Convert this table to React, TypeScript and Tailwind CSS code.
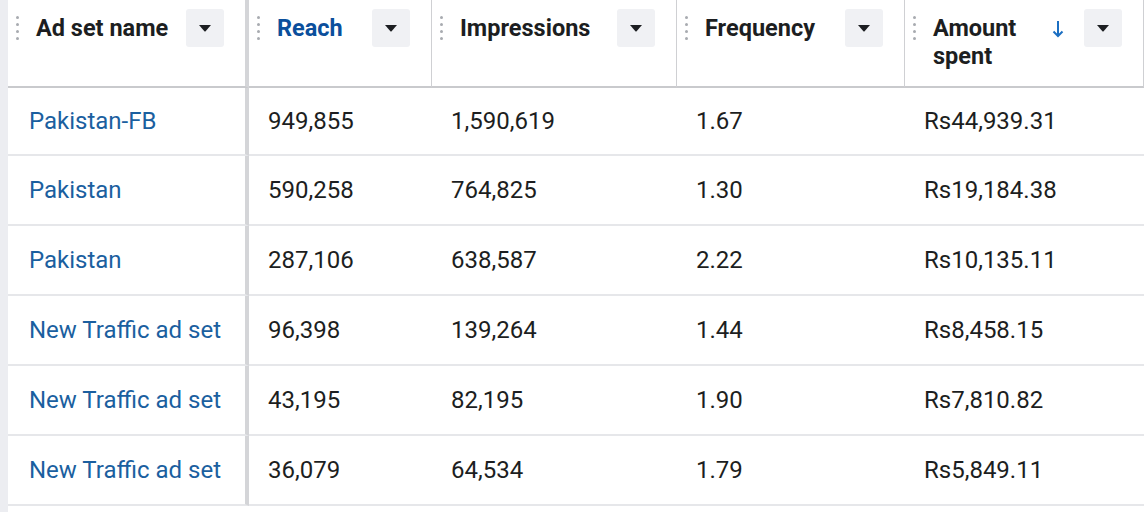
import React from "react";

const rows = [
  { name: "Pakistan-FB", reach: "949,855", impressions: "1,590,619", frequency: "1.67", spent: "Rs44,939.31" },
  { name: "Pakistan", reach: "590,258", impressions: "764,825", frequency: "1.30", spent: "Rs19,184.38" },
  { name: "Pakistan", reach: "287,106", impressions: "638,587", frequency: "2.22", spent: "Rs10,135.11" },
  { name: "New Traffic ad set", reach: "96,398", impressions: "139,264", frequency: "1.44", spent: "Rs8,458.15" },
  { name: "New Traffic ad set", reach: "43,195", impressions: "82,195", frequency: "1.90", spent: "Rs7,810.82" },
  { name: "New Traffic ad set", reach: "36,079", impressions: "64,534", frequency: "1.79", spent: "Rs5,849.11" },
];

function DragDots() {
  return (
    <div className="flex flex-col gap-[4px] pt-[3px] w-[3px] shrink-0">
      <span className="w-[3px] h-[3px] rounded-full bg-[#a8abb0]" />
      <span className="w-[3px] h-[3px] rounded-full bg-[#a8abb0]" />
      <span className="w-[3px] h-[3px] rounded-full bg-[#a8abb0]" />
      <span className="w-[3px] h-[3px] rounded-full bg-[#a8abb0]" />
    </div>
  );
}

function MenuButton() {
  return (
    <div className="w-[38px] h-[38px] bg-[#f0f1f4] rounded-[3px] flex items-center justify-center shrink-0">
      <svg width="14" height="8" viewBox="0 0 14 8">
        <path d="M1 1h12L7.6 7.2a.8.8 0 0 1-1.2 0z" fill="#1c1e21" />
      </svg>
    </div>
  );
}

function HeaderCell({
  label,
  width,
  blue,
  sorted,
  first,
}: {
  label: React.ReactNode;
  width: string;
  blue?: boolean;
  sorted?: boolean;
  first?: boolean;
}) {
  return (
    <div
      className={`${width} h-[88px] shrink-0 flex items-start pt-[9px] pl-[8px] pr-[21px] border-b-2 border-b-[#c9cacd] ${
        first ? "border-r-4 border-r-[#d4d5d8]" : "border-r border-r-[#cfd0d3]"
      }`}
    >
      <div className="pt-[4px]">
        <DragDots />
      </div>
      <div
        className={`ml-[17px] flex-1 text-[23.5px] leading-[28px] font-bold pt-[5px] ${
          blue ? "text-[#0b4f9c]" : "text-[#1c1e21]"
        }`}
      >
        {label}
      </div>
      {sorted && (
        <svg width="12" height="18" viewBox="0 0 12 18" className="mt-[11px] mr-[20px]">
          <path d="M6 1v15M1.5 11.5 6 16l4.5-4.5" stroke="#1b6fc2" strokeWidth="2" fill="none" />
        </svg>
      )}
      <MenuButton />
    </div>
  );
}

function BodyCell({
  children,
  width,
  first,
  link,
  height,
}: {
  children: React.ReactNode;
  width: string;
  first?: boolean;
  link?: boolean;
  height: string;
}) {
  return (
    <div
      className={`${width} ${height} shrink-0 flex items-center border-b-2 border-b-[#e6e7ea] ${
        first ? "border-r-4 border-r-[#d4d5d8] pl-[21px]" : "pl-[19px]"
      } ${link ? "text-[#1b5f9f]" : "text-[#1c1e21]"}`}
    >
      {children}
    </div>
  );
}

export default function App() {
  return (
    <div
      className="w-[1148px] h-[512px] overflow-hidden bg-white flex"
      style={{ fontFamily: "Roboto, 'Liberation Sans', sans-serif" }}
    >
      <div className="w-[8px] shrink-0 bg-[#ecedf1]" />
      <div className="flex flex-col text-[24px]">
        <div className="flex">
          <HeaderCell first width="w-[241px]" label="Ad set name" />
          <HeaderCell blue width="w-[183px]" label="Reach" />
          <HeaderCell width="w-[245px]" label="Impressions" />
          <HeaderCell width="w-[228px]" label="Frequency" />
          <HeaderCell sorted width="w-[239px]" label={<>Amount<br />spent</>} />
        </div>
        {rows.map((r, i) => {
          const h = i === 0 ? "h-[68px]" : "h-[70px]";
          return (
            <div key={i} className="flex">
              <BodyCell first link height={h} width="w-[241px]">{r.name}</BodyCell>
              <BodyCell height={h} width="w-[183px]">{r.reach}</BodyCell>
              <BodyCell height={h} width="w-[245px]">{r.impressions}</BodyCell>
              <BodyCell height={h} width="w-[228px]">{r.frequency}</BodyCell>
              <BodyCell height={h} width="w-[239px]">{r.spent}</BodyCell>
            </div>
          );
        })}
      </div>
    </div>
  );
}
